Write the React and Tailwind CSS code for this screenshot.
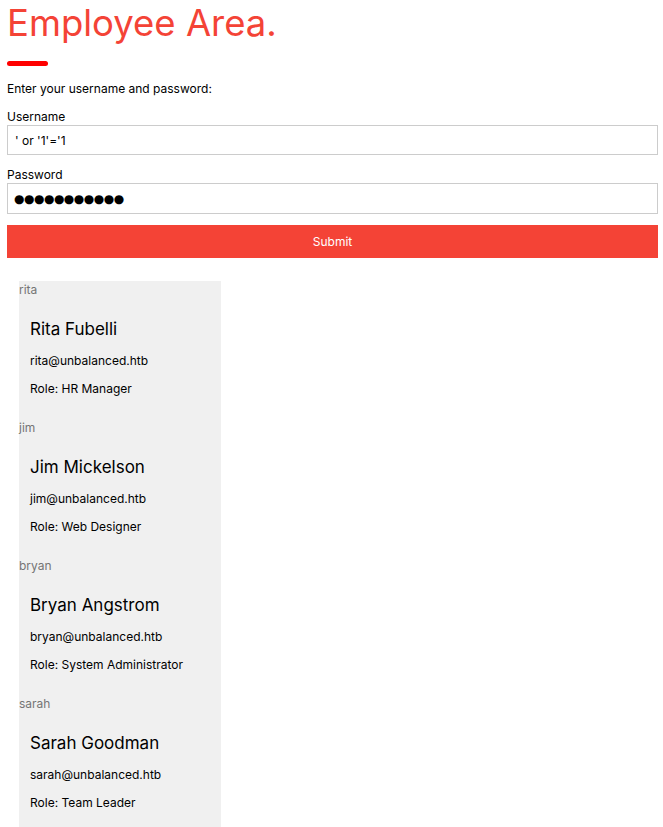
import React from "react";

const employees = [
  { user: "rita", name: "Rita Fubelli", email: "rita@unbalanced.htb", role: "HR Manager" },
  { user: "jim", name: "Jim Mickelson", email: "jim@unbalanced.htb", role: "Web Designer" },
  { user: "bryan", name: "Bryan Angstrom", email: "bryan@unbalanced.htb", role: "System Administrator" },
  { user: "sarah", name: "Sarah Goodman", email: "sarah@unbalanced.htb", role: "Team Leader" },
];

export default function App() {
  return (
    <div className="min-h-screen bg-white pl-[7px] pr-[5px] text-black [font-family:Inter,'Liberation_Sans',sans-serif]">
      <h1 className="pt-[3px] text-[36.5px] leading-[41px] text-[#f44336]">Employee Area.</h1>
      <div className="mt-[17px] h-[5px] w-[41px] rounded-full bg-[#ff0000]" />
      <p className="mt-[15px] text-[12px] leading-[16px]">Enter your username and password:</p>

      <form className="mt-[12px]" onSubmit={(e) => e.preventDefault()}>
        <label className="block text-[12px] leading-[16px]">Username</label>
        <input
          className="block h-[30px] w-full border border-[#ccc] px-[7px] text-[12px] outline-none"
          defaultValue="' or '1'='1"
        />
        <label className="mt-[12px] block text-[12px] leading-[16px]">Password</label>
        <input
          readOnly
          className="block h-[31px] w-full border border-[#ccc] px-[6px] text-[12px] tracking-[-0.5px] outline-none [font-family:'DejaVu_Sans',sans-serif]"
          value="●●●●●●●●●●●"
        />
        <button className="mt-[11px] block h-[33px] w-full bg-[#f44336] text-[12px] text-white">Submit</button>
      </form>

      <div className="ml-[12px] mt-[23px] w-[202px] bg-[#f0f0f0]">
        {employees.map((e) => (
          <div key={e.user} className="h-[138px]">
            <div className="pt-[1px] text-[12px] leading-[16px] text-[#757575]">{e.user}</div>
            <div className="px-[11px] pt-[20px]">
              <div className="text-[17px] leading-[22px]">{e.name}</div>
              <div className="mt-[13px] text-[12px] leading-[16px]">{e.email}</div>
              <div className="mt-[12px] text-[12px] leading-[16px]">Role: {e.role}</div>
            </div>
          </div>
        ))}
      </div>
    </div>
  );
}
